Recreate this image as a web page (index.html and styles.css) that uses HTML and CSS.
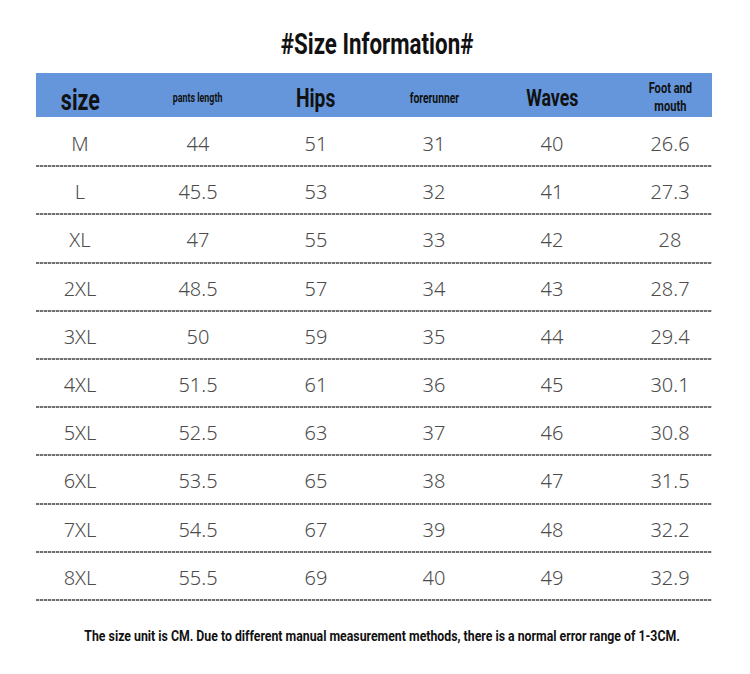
FILE: index.html
```html
<!DOCTYPE html>
<html>
<head>
<meta charset="utf-8">
<link rel="stylesheet" href="styles.css">
</head>
<body>
<div class="page">
  <h1 class="title"><span class="cond">#Size Information#</span></h1>
  <div class="table">
    <div class="row head">
      <div class="cell first"><span class="cond h-size">size</span></div>
      <div class="cell"><span class="cond h-small">pants length</span></div>
      <div class="cell"><span class="cond h-hips">Hips</span></div>
      <div class="cell"><span class="cond h-small2">forerunner</span></div>
      <div class="cell"><span class="cond h-waves">Waves</span></div>
      <div class="cell last"><span class="cond h-foot">Foot and<br>mouth</span></div>
    </div>
    <div class="row"><div class="cell first">M</div><div class="cell">44</div><div class="cell">51</div><div class="cell">31</div><div class="cell">40</div><div class="cell last">26.6</div></div>
    <div class="row"><div class="cell first">L</div><div class="cell">45.5</div><div class="cell">53</div><div class="cell">32</div><div class="cell">41</div><div class="cell last">27.3</div></div>
    <div class="row"><div class="cell first">XL</div><div class="cell">47</div><div class="cell">55</div><div class="cell">33</div><div class="cell">42</div><div class="cell last">28</div></div>
    <div class="row"><div class="cell first">2XL</div><div class="cell">48.5</div><div class="cell">57</div><div class="cell">34</div><div class="cell">43</div><div class="cell last">28.7</div></div>
    <div class="row"><div class="cell first">3XL</div><div class="cell">50</div><div class="cell">59</div><div class="cell">35</div><div class="cell">44</div><div class="cell last">29.4</div></div>
    <div class="row"><div class="cell first">4XL</div><div class="cell">51.5</div><div class="cell">61</div><div class="cell">36</div><div class="cell">45</div><div class="cell last">30.1</div></div>
    <div class="row"><div class="cell first">5XL</div><div class="cell">52.5</div><div class="cell">63</div><div class="cell">37</div><div class="cell">46</div><div class="cell last">30.8</div></div>
    <div class="row"><div class="cell first">6XL</div><div class="cell">53.5</div><div class="cell">65</div><div class="cell">38</div><div class="cell">47</div><div class="cell last">31.5</div></div>
    <div class="row"><div class="cell first">7XL</div><div class="cell">54.5</div><div class="cell">67</div><div class="cell">39</div><div class="cell">48</div><div class="cell last">32.2</div></div>
    <div class="row"><div class="cell first">8XL</div><div class="cell">55.5</div><div class="cell">69</div><div class="cell">40</div><div class="cell">49</div><div class="cell last">32.9</div></div>
  </div>
  <p class="note"><span class="cond">The size unit is CM. Due to different manual measurement methods, there is a normal error range of 1-3CM.</span></p>
</div>
</body>
</html>
```

FILE: styles.css
```css
html, body {
  margin: 0;
  padding: 0;
  background: #ffffff;
}
.page {
  width: 750px;
  height: 674px;
  padding: 26px 38px 0 36px;
  box-sizing: border-box;
  font-family: "Noto Sans", "Open Sans", sans-serif;
}
.cond {
  display: inline-block;
  font-family: Roboto, "Liberation Sans", sans-serif;
  font-weight: 700;
  color: #111;
  transform: scaleX(0.74);
  transform-origin: center;
  white-space: nowrap;
}
.title {
  margin: 0;
  height: 47px;
  font-size: 29px;
  line-height: 34px;
  text-align: center;
  font-weight: 700;
  padding-left: 6px;
}
.title .cond {
  transform: scaleX(0.77);
}
.table {
  display: flex;
  flex-direction: column;
}
.row {
  display: grid;
  grid-template-columns: 103px repeat(4, 118px) 101px;
  height: 48.2px;
  align-items: center;
  background-image: repeating-linear-gradient(90deg, #707070 0 3px, #cfcfcf 3px 4px);
  background-size: 100% 2px;
  background-repeat: no-repeat;
  background-position: 0 100%;
  font-size: 20px;
  font-weight: 300;
  color: #4c4c4c;
}
.row .cell {
  text-align: center;
  padding-top: 1px;
}
.row .cell.first {
  padding-right: 15px;
}
.row .cell.last {
  padding-left: 17px;
}
.row.head {
  height: 44px;
  background: #6596dc;
  margin-bottom: 2px;
}
.row.head .cell {
  padding-top: 0;
}
.h-size {
  font-size: 29px;
  line-height: 30px;
  padding-top: 10px;
}
.h-hips {
  font-size: 26px;
  line-height: 28px;
  padding-top: 6px;
}
.h-waves {
  font-size: 24px;
  line-height: 28px;
  padding-top: 6px;
}
.h-small {
  font-size: 12px;
  line-height: 14px;
  padding-bottom: 4px;
}
.h-small2 {
  font-size: 14px;
  line-height: 14px;
}
.h-foot {
  font-size: 15px;
  line-height: 18px;
  padding-top: 6px;
  white-space: nowrap;
}
.note {
  margin: 0;
  padding-top: 26px;
  padding-left: 17px;
  display: flex;
  justify-content: center;
  font-size: 15px;
  line-height: 18px;
}
.note .cond {
  flex: none;
  transform: scaleX(0.82);
}
```
